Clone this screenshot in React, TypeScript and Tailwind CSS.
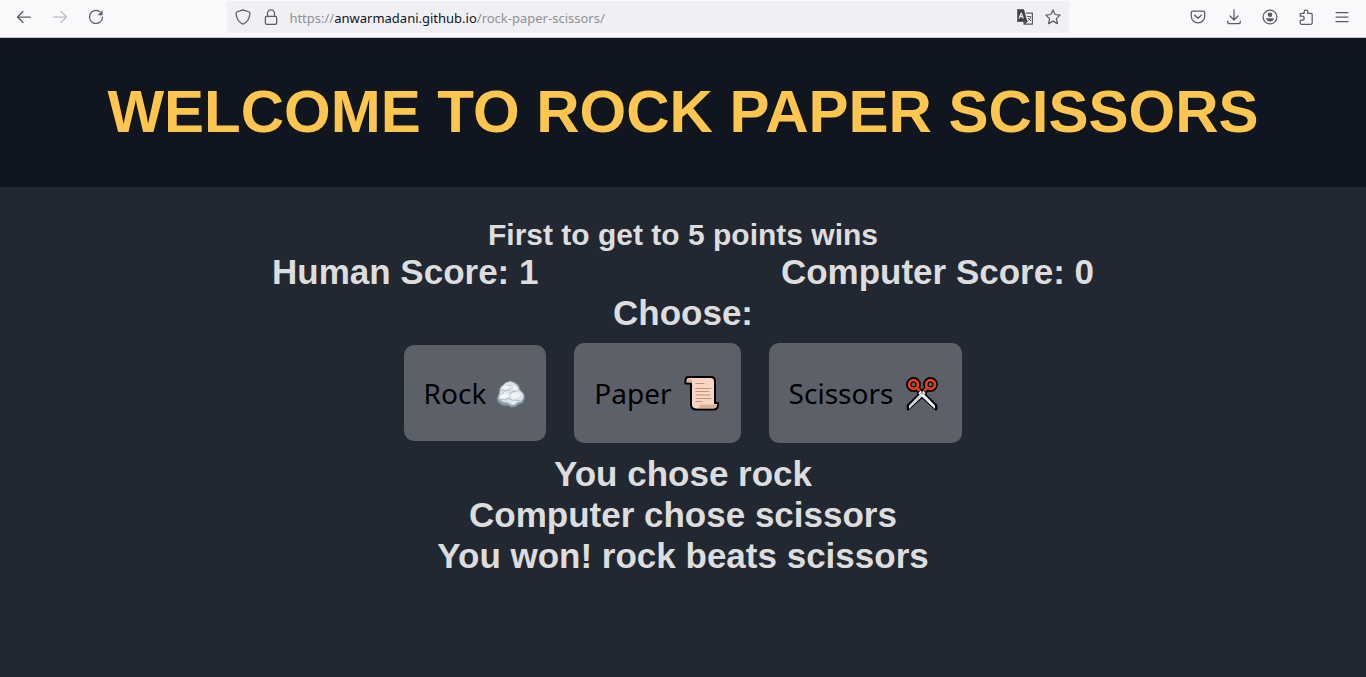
import { useState } from "react";
import type { ReactNode } from "react";

type Choice = "rock" | "paper" | "scissors";

const beats: Record<Choice, Choice> = { rock: "scissors", paper: "rock", scissors: "paper" };
const choices: Choice[] = ["rock", "paper", "scissors"];

function Glyph({ children }: { children: ReactNode }) {
  return (
    <svg viewBox="0 0 16 16" className="size-4" fill="none" stroke="currentColor" strokeWidth="1.25" strokeLinecap="round" strokeLinejoin="round" aria-hidden="true">
      {children}
    </svg>
  );
}

function ToolButton({ label, disabled, children }: { label: string; disabled?: boolean; children: ReactNode }) {
  return (
    <button type="button" aria-label={label} disabled={disabled} className="flex size-7 items-center justify-center rounded text-[#5b5b66] disabled:text-[#bcbcc2]">
      <Glyph>{children}</Glyph>
    </button>
  );
}

function BrowserBar() {
  return (
    <div className="flex h-[38px] items-start border-b border-[#cccccc] bg-[#f9f9fb] font-normal">
      <div className="flex flex-[226] gap-2 pt-[3px] pl-[10px]">
        <ToolButton label="Back">
          <path d="M1.5 8h13M7 2.5 1.5 8 7 13.5" />
        </ToolButton>
        <ToolButton label="Forward" disabled>
          <path d="M1.5 8h13M9 2.5 14.5 8 9 13.5" />
        </ToolButton>
        <ToolButton label="Reload">
          <path d="M11.8 2.7A6.5 6.5 0 1 0 14.5 8" />
          <path d="M14.6 1.3v5H9.6z" fill="currentColor" stroke="none" />
        </ToolButton>
      </div>
      <div className="mt-px flex h-8 w-[842px] items-center rounded bg-[#f0f0f4] px-[2px]">
        <ToolButton label="Tracking protection">
          <path d="M8 .8 14.2 3c.7.3.7.8.7 1.3C14.7 9.200 12 13.300 8 15.200 4 13.300 1.300 9.200 1.100 4.300c0-.5 0-1 .7-1.300z" />
        </ToolButton>
        <ToolButton label="Connection secure">
          <rect x="2.300" y="7.300" width="11.400" height="8" rx="1.600" />
          <path d="M4.500 7.300V4.300a3.500 3.500 0 0 1 7 0v3" />
        </ToolButton>
        <div role="textbox" aria-label="Address" className="ml-1 flex-1 pt-[2px] font-['Noto_Sans',sans-serif] text-[13px] leading-8 text-[#8f8f96]">
          https://<span className="text-[#15141a]">anwarmadani.github.io</span>/rock-paper-scissors/
        </div>
        <ToolButton label="Translate page">
          <path d="M9.500 4h5.900v11.200H7.800l-1-2.700" />
          <path d="M.3.500h6.400l3.300 12H.3z" fill="#3f3f46" stroke="#3f3f46" strokeWidth=".6" />
          <path d="M2.200 9.200 4.200 4l2 5.200M2.900 7.600h2.600" stroke="#e8e8ee" />
          <path d="M10.500 7.500h3.200c0 2-1.500 3.200-2.700 4M11.300 9.300l2.400 2.400" strokeWidth="1" />
          <path d="m7 15 3-2.500" stroke="#3f3f46" />
        </ToolButton>
        <ToolButton label="Bookmark">
          <path d="m8 .9 2.100 4.600 5 .6-3.700 3.500 1 5L8 12.100l-4.400 2.500 1-5L.9 6.100l5-.6z" />
        </ToolButton>
      </div>
      <div className="flex flex-[298] justify-end gap-2 pt-[3px] pr-[10px]">
        <ToolButton label="Save to Pocket">
          <path d="M2.800 2h10.400a1.500 1.500 0 0 1 1.500 1.500v3.700a6.700 6.700 0 0 1-13.400 0V3.500A1.500 1.500 0 0 1 2.800 2z" />
          <path d="M4.800 6.200 8 9.200l3.200-3" strokeWidth="1.500" />
        </ToolButton>
        <ToolButton label="Downloads">
          <path d="M8 .8v10M4 7l4 4 4-4M1.700 12v1.300c0 .8.600 1.400 1.400 1.400h9.800c.8 0 1.400-.6 1.400-1.400V12" />
        </ToolButton>
        <ToolButton label="Account">
          <circle cx="8" cy="8" r="6.900" />
          <circle cx="8" cy="5.800" r="2.300" fill="currentColor" stroke="none" />
          <path d="M4 9.300h8c0 2-1.700 3.200-4 3.200s-4-1.200-4-3.200z" fill="currentColor" stroke="none" />
        </ToolButton>
        <ToolButton label="Extensions">
          <path d="M2.200 7.200V5.500c0-.8.300-1.200 1.200-1.200h2.800V2.800a1.800 1.800 0 0 1 3.600 0v1.500h3.200c.7 0 1.200.5 1.200 1.200v8.600c0 .7-.5 1.200-1.200 1.200H3.400c-.8 0-1.200-.5-1.200-1.200v-2.800h1.900a1.900 1.900 0 0 0 0-4.100z" />
        </ToolButton>
        <ToolButton label="Menu">
          <path d="M2 3.500h12M2 8h12M2 12.500h12" />
        </ToolButton>
      </div>
    </div>
  );
}

function RockIcon() {
  return (
    <svg viewBox="0 -2 30 30" className="size-[30px]" aria-hidden="true">
      <path d="M10 2.500 14.500 1l4.500 1.500 3.500 2.500 1.700 4.500 3.800 4.500.500 4.500-2 4.500-4.500 1.500-2 2-4.500.7-4-2-4 .3-5-3L1 18.500 3 13l1-5.500z" fill="#8ea1b0" stroke="#7d8d9b" strokeWidth=".6" strokeLinejoin="round" />
      <path d="m9.500 3 5-1.500 4 1.800 3 2.500 1.500 4.200 4.200 4 .3 4-2.500 3.500-4 1-2.500 2.500-4-.5-3-2-4.500-.5-4.500-3.500 1.500-5 .800-6z" fill="#d9e2e8" />
      <path d="m6 8 5-4 5 1-2 3-5 2zM17 5l4 2 1 4-5-1zM3.500 16 8 12l5 2-1 4-7 1zM15 14l6-2 4 3-3 3-6 1zM12 21l6-1 2 2-3 2z" fill="#f0f4f6" />
      <path d="m6 10 4 1 4-2M11 5l4 1M16 12l5-1.500M4 19l4 1 4-1.500M12 18l4 2M15 22l4-2 5 1M8 12l-3 3M14 14l2-2" fill="none" stroke="#9fb1bd" strokeWidth=".8" strokeLinecap="round" />
    </svg>
  );
}

function PaperIcon() {
  return (
    <svg viewBox="0 -1 36 36" className="h-9 w-[39px]" aria-hidden="true">
      <path d="M5 1h22c3 0 4.500 1.500 4.500 4v22h3v1.500c0 3-1.500 5-4.500 5H13c-3.500 0-5.500-2-5.500-5V7.500H2V5c0-2.500 1-4 3-4z" fill="#f7d7c4" stroke="#000" strokeWidth="2" strokeLinejoin="round" />
      <path d="M3.200 6.300c0-2 .8-3.800 2.300-3.800 2 0 3 1.800 3 3.800zM16.500 28.500h17c0 2.500-1.200 3.800-3.500 3.800H13c2 0 3.500-1.300 3.500-3.800z" fill="#dfb092" />
      <path d="M12 7.500h9M12 12.500h16M12 15.500h14M12 19h15M12 22.500h16M12 25.500h7" stroke="#c09478" strokeWidth="1.200" />
    </svg>
  );
}

function ScissorsIcon() {
  return (
    <svg viewBox="0 -1 36 36" className="h-9 w-[39px]" aria-hidden="true">
      <g fill="none" stroke="#000">
        <circle cx="9" cy="8.500" r="4.700" strokeWidth="5.500" />
        <circle cx="26" cy="8.500" r="4.700" strokeWidth="5.500" />
        <path d="m12 12 6 6M23 12l-6 6" strokeWidth="6" />
      </g>
      <path d="m16 14.500 15.500 15v3.800L13.800 17.200zM19 14.500 3.500 29.500v3.800l17.700-16.100z" fill="#000" stroke="#000" strokeWidth="2.600" strokeLinejoin="round" />
      <path d="m19 14.500-14.500 15v3.500l16.700-15.800z" fill="#d3d6d8" />
      <path d="m16 14.500 14.500 15v3.500L13.800 17.200z" fill="#eceff1" />
      <g fill="none" stroke="#e83c1b" strokeWidth="2.800">
        <circle cx="9" cy="8.500" r="4.400" />
        <circle cx="26" cy="8.500" r="4.400" />
        <path d="m12.200 11.700 3 3M22.800 11.700l-3 3" />
      </g>
      <circle cx="17.500" cy="17.200" r="1.200" fill="#9ca3a8" />
    </svg>
  );
}

function ChoiceButton({ label, icon, onClick }: { label: string; icon: ReactNode; onClick: () => void }) {
  return (
    <button type="button" onClick={onClick} className="flex items-center gap-[10px] rounded-[10px] bg-[#5c6068] px-5 py-8 font-['Noto_Sans',sans-serif] text-[28px] leading-8 text-black hover:bg-[#6b7078]">
      {label}
      {icon}
    </button>
  );
}

export default function App() {
  const [human, setHuman] = useState(1);
  const [computer, setComputer] = useState(0);
  const [picked, setPicked] = useState<[Choice, Choice]>(["rock", "scissors"]);

  const play = (mine: Choice) => {
    const theirs = choices[Math.floor(Math.random() * 3)];
    setPicked([mine, theirs]);
    if (beats[mine] === theirs) setHuman(human + 1);
    else if (mine !== theirs) setComputer(computer + 1);
  };

  const [mine, theirs] = picked;
  const outcome =
    mine === theirs ? "It's a tie!" : beats[mine] === theirs ? `You won! ${mine} beats ${theirs}` : `You lost! ${theirs} beats ${mine}`;

  return (
    <div className="flex min-h-screen flex-col bg-[#222831] font-['Liberation_Sans',Arial,sans-serif] font-bold text-[#dddddd]">
      <BrowserBar />
      <header className="bg-[#10161f] px-10 pt-[39px] pb-[41px] text-center text-[#ffc64f]">
        <h1 className="text-[60px] leading-[69px]">WELCOME TO ROCK PAPER SCISSORS</h1>
      </header>
      <main className="flex flex-col items-center pt-[31px] text-center text-[35px] leading-[41px]">
        <h2 className="text-[30px] leading-[33px]">First to get to 5 points wins</h2>
        <div className="flex w-full max-w-[822px] justify-between">
          <p>Human Score: {human}</p>
          <p>Computer Score: {computer}</p>
        </div>
        <p>Choose:</p>
        <div className="my-[10px] flex items-center gap-7 font-normal">
          <ChoiceButton label="Rock" icon={<RockIcon />} onClick={() => play("rock")} />
          <ChoiceButton label="Paper" icon={<PaperIcon />} onClick={() => play("paper")} />
          <ChoiceButton label="Scissors" icon={<ScissorsIcon />} onClick={() => play("scissors")} />
        </div>
        <p>You chose {mine}</p>
        <p>Computer chose {theirs}</p>
        <p>{outcome}</p>
      </main>
    </div>
  );
}
